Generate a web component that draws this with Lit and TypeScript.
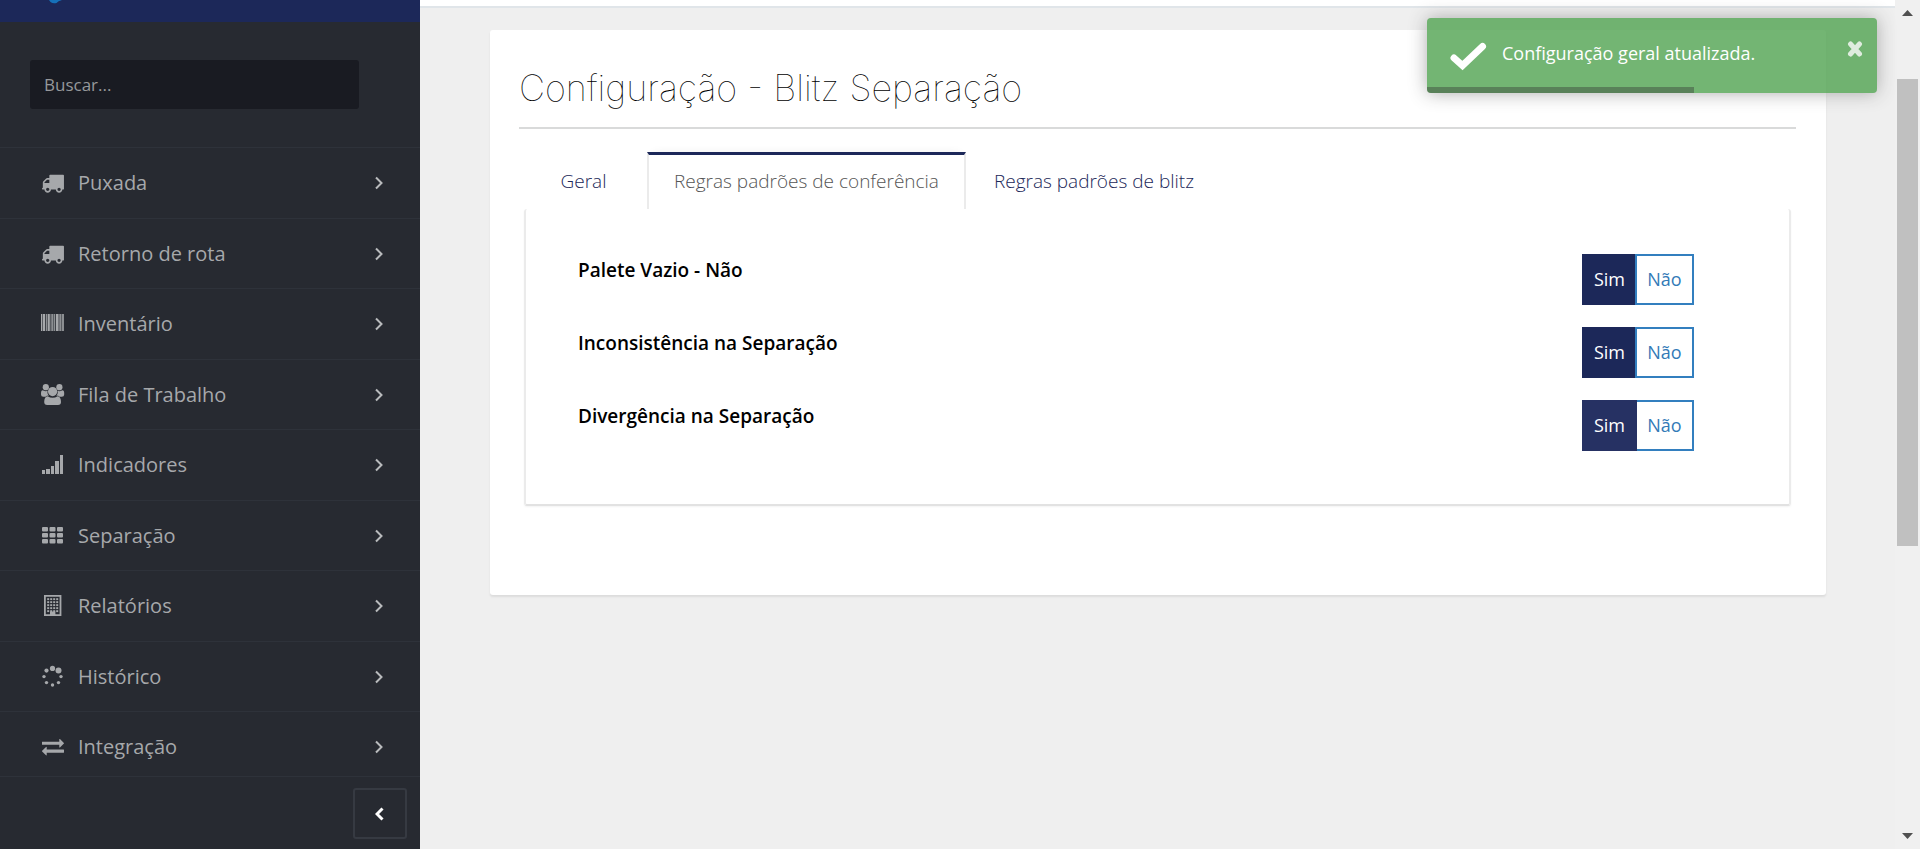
import { LitElement, html, css, svg } from "lit";
import { customElement, state } from "lit/decorators.js";

const BARS = [[0, 1], [1.6, 2.4], [4.8, 1], [6.6, 2.2], [9.6, 1], [11.2, 1.2], [13.2, 1], [15, 2.6], [18.4, 1.4], [20.6, 1.2], [22.2, 0.8]];
const BUILDING_WINDOWS = [0, 1, 2, 3, 4].flatMap((r) => [0, 1, 2, 3].map((c) => [6.2 + c * 3, 4.2 + r * 3]));
const DOTS = [[11.5, 3.4, 2.6], [17.5, 5.6, 3], [20, 11.6, 1.7], [17.5, 17.6, 1.7], [11.5, 20, 1.7], [5.5, 17.6, 1.7], [3, 11.6, 1.7], [5.5, 5.6, 2.1]];

const icons: Record<string, unknown> = {
  truck: svg`<path transform="translate(.2 .6) scale(.0127)" d="M640 1408q0-52-38-90t-90-38-90 38-38 90 38 90 90 38 90-38 38-90zm-384-512h384v-256h-158q-13 0-22 9l-195 195q-9 9-9 22v30zm1280 512q0-52-38-90t-90-38-90 38-38 90 38 90 90 38 90-38 38-90zm256-1088v1024q0 15-4 26.5t-13.5 18.5-16.5 11.5-23.5 6-22.5 2-25.5 0-22.5-.5q0 106-75 181t-181 75-181-75-75-181h-384q0 106-75 181t-181 75-181-75-75-181h-64q-3 0-22.5.5t-25.5 0-22.5-2-23.5-6-16.5-11.5-13.5-18.5-4-26.5q0-26 19-45t45-19v-320q0-8-.5-35t0-38 2.5-34.5 6.5-37 14-30.5 22.5-30l198-198q19-19 50.5-32t58.5-13h160v-192q0-26 19-45t45-19h1024q26 0 45 19t19 45z"/>`,
  barcode: BARS.map(([x, w]) => svg`<rect x=${x} y="2" width=${w} height="17"/>`),
  group: svg`<circle cx="4.8" cy="4.2" r="3.1"/><circle cx="18.4" cy="4.2" r="3.1"/>
    <path d="M0 10.5Q0 7.2 1.8 7.2Q4.6 9 6.6 7.8Q6 11.5 8 12.6Q5.6 12.6 4.6 13.8H2.4Q0 13.8 0 11.6Z"/>
    <path d="M23.2 10.5Q23.2 7.2 21.4 7.2Q18.6 9 16.6 7.8Q17.2 11.5 15.2 12.6Q17.6 12.6 18.6 13.8H20.8Q23.2 13.8 23.2 11.6Z"/>
    <circle cx="11.6" cy="8.6" r="4.6"/>
    <path d="M6.6 13.2Q11.6 16.4 16.6 13.2Q20 13.6 20 19Q20 22 17 22H6.2Q3.2 22 3.2 19Q3.2 13.6 6.6 13.2Z"/>`,
  signal: svg`<rect x="1" y="17" width="3" height="4"/><rect x="5" y="16" width="4" height="5"/><rect x="10" y="13" width="3" height="8"/><rect x="14" y="8" width="4" height="13"/><rect x="19" y="2" width="3" height="19"/>`,
  grid: [3, 9, 15].map((y) => [1, 8.5, 16].map((x) => svg`<rect x=${x} y=${y} width="6" height="4.6" rx="1"/>`)),
  building: svg`<path fill-rule="evenodd" d="M3 1H20.4V22H3ZM4.8 2.8V20.2H9V17.4H14.4V20.2H18.6V2.8Z"/>${BUILDING_WINDOWS.map(([x, y]) => svg`<rect x=${x} y=${y} width="2" height="1.9"/>`)}`,
  spinner: DOTS.map(([x, y, r]) => svg`<circle cx=${x} cy=${y} r=${r}/>`),
  exchange: svg`<path transform="translate(1 .4) scale(.01228)" d="M1792 1184v192q0 13-9.5 22.5t-22.5 9.5h-1376v192q0 13-9.5 22.5t-22.5 9.5q-12 0-24-10l-319-320q-9-9-9-22 0-14 9-23l320-320q9-9 23-9 13 0 22.5 9.5t9.5 22.5v192h1376q13 0 22.5 9.5t9.5 22.5zm0-544q0 14-9 23l-320 320q-9 9-23 9-13 0-22.5-9.5t-9.5-22.5v-192h-1376q-13 0-22.5-9.5t-9.5-22.5v-192q0-13 9.5-22.5t22.5-9.5h1376v-192q0-14 9-23t23-9q12 0 24 10l319 319q9 9 9 23z"/>`,
};

const MENU = [
  ["truck", "Puxada"],
  ["truck", "Retorno de rota"],
  ["barcode", "Inventário"],
  ["group", "Fila de Trabalho"],
  ["signal", "Indicadores"],
  ["grid", "Separação"],
  ["building", "Relatórios"],
  ["spinner", "Histórico"],
  ["exchange", "Integração"],
];

@customElement("side-menu")
class SideMenu extends LitElement {
  static styles = css`
    :host { display: flex; flex-direction: column; min-height: 0; background: #272a31; color: #a6a8ab; }
    .brand { flex: none; height: 22px; background: #1c2859; padding-left: 48px; }
    .brand svg { display: block; }
    .search { flex: none; padding: 38px 61px 38px 30px; }
    .search input {
      display: block; box-sizing: border-box; width: 100%; height: 49px; padding: 0 14px;
      border: 0; border-radius: 3px; background: #191b22; color: #a6a8ab; font: 17px "Open Sans", sans-serif; outline: 0;
    }
    .search input::placeholder { color: #96989b; opacity: 1; }
    nav { flex: 1; min-height: 0; overflow: hidden; }
    ul { list-style: none; margin: 0; padding: 0; }
    li { box-sizing: border-box; height: 71px; border-top: 1px solid #2e323a; }
    li:nth-child(even) { height: 70px; }
    a {
      display: flex; align-items: center; height: 100%; box-sizing: border-box; padding: 0 36px 0 41px;
      color: inherit; text-decoration: none; font: 20px/28px "Open Sans", sans-serif;
    }
    a span { flex: 1; padding-left: 13px; }
    svg { flex: none; fill: #a6a8ab; }
    .chevron { fill: none; stroke: #b9bbbd; stroke-width: 2; }
    .foot { flex: none; display: flex; justify-content: flex-end; padding: 11px 13px 10px; border-top: 1px solid #2e323a; }
    .foot button {
      display: grid; place-items: center; width: 54px; height: 51px; padding: 0;
      background: none; border: 2px solid #363a42; border-radius: 3px;
    }
    .foot .chevron { stroke: #fff; stroke-width: 3; }
  `;
  render() {
    return html`
      <div class="brand"><svg width="16" height="4" viewBox="0 0 16 4"><path fill="#1670b8" d="M1 0H14Q10 1 8.500 3Q5 4 2.500 2Z" /></svg></div>
      <div class="search"><input type="text" placeholder="Buscar..." aria-label="Buscar" /></div>
      <nav>
        <ul>
          ${MENU.map(([icon, label]) => html`<li><a href="#">
            <svg width="24" height="24" viewBox="0 0 24 24">${icons[icon]}</svg>
            <span>${label}</span>
            <svg class="chevron" width="10" height="14" viewBox="0 0 10 14"><path d="M2 1.500L7.500 7L2 12.500" /></svg>
          </a></li>`)}
        </ul>
      </nav>
      <div class="foot">
        <button aria-label="Recolher menu"><svg class="chevron" width="10" height="14" viewBox="0 0 10 14"><path d="M7.500 1.500L2 7L7.500 12.500" /></svg></button>
      </div>`;
  }
}

@customElement("toast-message")
class ToastMessage extends LitElement {
  static styles = css`
    :host {
      position: relative; display: flex; align-items: flex-start; box-sizing: border-box; height: 75px;
      border-radius: 4px; overflow: hidden; background: #51a351; color: #fff; opacity: 0.8; box-shadow: 0 0 18px #999;
      font: 18px/27px "Open Sans", sans-serif;
    }
    .check { flex: none; margin: 24px 15px 0 22px; }
    p { flex: 1; margin: 22px 0 0; }
    button { flex: none; margin: 22px 14px 0 0; padding: 0; border: 0; background: none; }
    button svg { display: block; opacity: 0.8; }
    .progress { position: absolute; left: 0; bottom: 0; height: 6px; background: #000; opacity: 0.4; }
  `;
  progress = 59.4;
  render() {
    return html`
      <svg class="check" width="38" height="29" viewBox="0 0 38 29"><path d="M5 16L13.500 23.500L33.500 4.500" fill="none" stroke="#fff" stroke-width="7" stroke-linecap="round" /></svg>
      <p role="status">Configuração geral atualizada.</p>
      <button aria-label="Fechar"><svg width="16" height="18" viewBox="0 0 16 18"><path d="M3.500 4L12.500 14M12.500 4L3.500 14" fill="none" stroke="#fff" stroke-width="5" stroke-linecap="round" /></svg></button>
      <div class="progress" style="width:${this.progress}%"></div>`;
  }
}

@customElement("app-root")
class AppRoot extends LitElement {
  static styles = css`
    :host { display: grid; grid-template-columns: 420px minmax(0, 1fr) 25px; height: 100vh; overflow: hidden; background: #efefef; font-family: "Open Sans", sans-serif; color: #000; }
    .topbar { height: 6px; background: #fff; border-bottom: 2px solid #e0e5e9; }
    .card { margin: 22px 69px 0 70px; padding: 29px 30px 89px 29px; background: #fff; border-radius: 3px; box-shadow: 0 2px 2px #dcdcdc; }
    h1 { margin: 0; padding-bottom: 10px; border-bottom: 2px solid #d9dada; font: 100 36px/58px Inter, sans-serif; }
    .tabs { display: flex; gap: 4px; padding: 23px 5px 0; }
    .tab {
      box-sizing: border-box; min-width: 119px; height: 57px; padding: 0 22px; text-align: center; text-decoration: none;
      border: 2px solid transparent; border-width: 3px 2px 0; color: #1c2859; font-size: 19px; font-weight: 300; line-height: 52px;
    }
    .tab.active { padding: 0 25px; border-color: #1c2859 #ebebeb transparent; color: #555; box-shadow: 0 -6px 8px -6px #0000000f; }
    .panel {
      display: grid; gap: 22px; margin: 0 5px; padding: 45px 95px 53px 52px;
      border: 2px solid #ebebeb; border-top: 0; border-bottom-color: #e2e2e2; border-radius: 3px; box-shadow: 0 1px 2px #0000000d;
    }
    .row { display: flex; justify-content: space-between; align-items: flex-start; }
    .name { font-size: 19px; font-weight: 600; line-height: 32px; }
    .switch { display: flex; }
    .switch button { min-width: 59px; height: 51px; padding: 0 10px 2px; border: 2px solid #337fbf; background: #fff; color: #337ab7; font: 18px "Open Sans", sans-serif; }
    .switch .on { position: relative; min-width: 55px; margin-right: -2px; background: #1c2859; border-color: #1c2859; color: #fff; }
    .switch .under { position: static; }
    .switch .hover { background: #263163; border-color: #263163; }
    .scroll { display: flex; flex-direction: column; align-items: center; justify-content: space-between; padding: 10px 2px; background: #f0f0f0; box-sizing: border-box; }
    .scroll svg { display: block; fill: #505050; }
    .track { flex: 1; align-self: stretch; padding-top: 63px; }
    .thumb { height: 62%; background: #c0c0c0; }
    .toast { position: absolute; top: 18px; right: 43px; width: 450px; }
  `;

  @state() rules = ["Palete Vazio - Não", "Inconsistência na Separação", "Divergência na Separação"];

  render() {
    return html`
      <side-menu></side-menu>
      <main>
        <div class="topbar"></div>
        <section class="card">
          <h1>Configuração - Blitz Separação</h1>
          <div class="tabs">
            <a class="tab" href="#">Geral</a>
            <a class="tab active" href="#">Regras padrões de conferência</a>
            <a class="tab" href="#">Regras padrões de blitz</a>
          </div>
          <div class="panel">
            ${this.rules.map((name, i) => html`
              <div class="row">
                <span class="name" id="rule-${i}">${name}</span>
                <div class="switch" role="group" aria-labelledby="rule-${i}">
                  <button class="on ${i === 2 ? "hover" : "under"}" aria-pressed="true">Sim</button>
                  <button aria-pressed="false">Não</button>
                </div>
              </div>`)}
          </div>
        </section>
      </main>
      <div class="scroll" aria-hidden="true">
        <svg width="11" height="6" viewBox="0 0 11 6"><path d="M0 6L5.500 0L11 6Z" /></svg>
        <div class="track"><div class="thumb"></div></div>
        <svg width="11" height="6" viewBox="0 0 11 6"><path d="M0 0L5.500 6L11 0Z" /></svg>
      </div>
      <toast-message class="toast"></toast-message>`;
  }
}
